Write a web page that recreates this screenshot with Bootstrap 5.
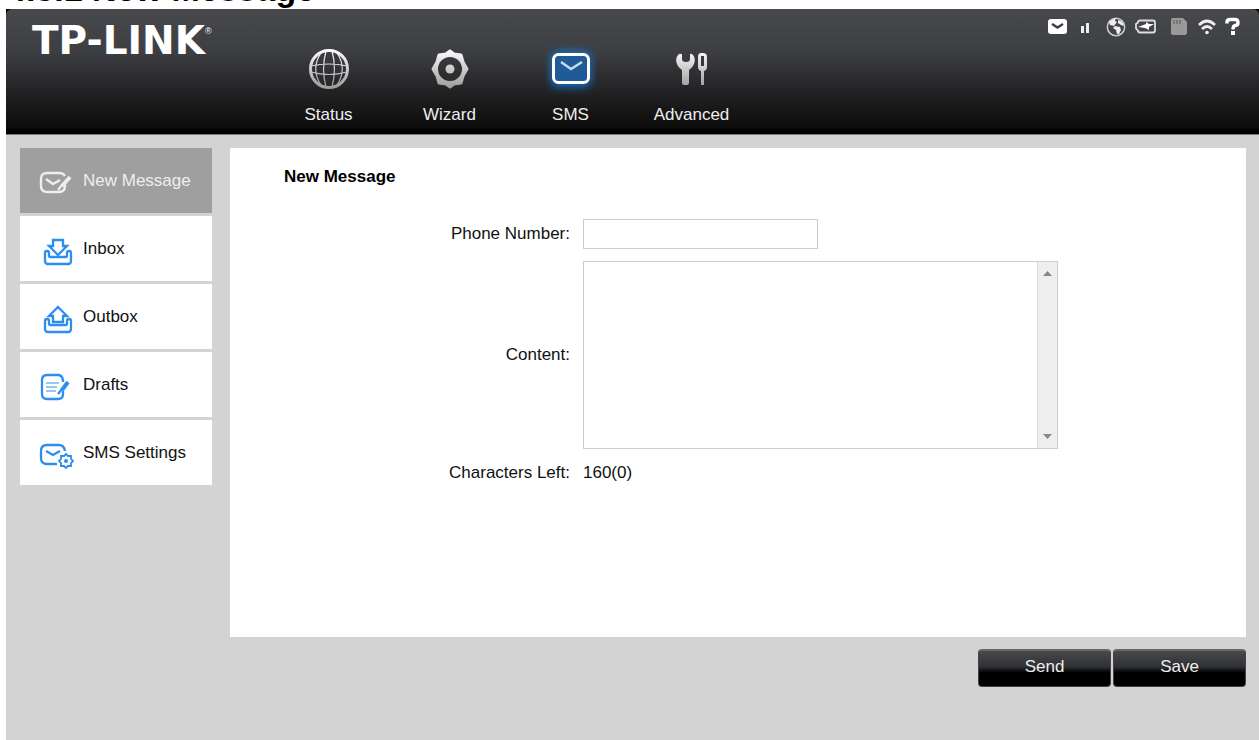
<!DOCTYPE html>
<html lang="en">
<head>
<meta charset="utf-8">
<meta name="viewport" content="width=device-width, initial-scale=1">
<title>New Message</title>
<link href="https://cdn.jsdelivr.net/npm/bootstrap@5.3.0/dist/css/bootstrap.min.css" rel="stylesheet">
<style>
  body { font: 17px/24px "Liberation Sans", Arial, sans-serif; color: #111; background: #fff; }
  svg { display: block; flex: none; }
  .doc-heading { height: 9px; padding-left: 7px; font-size: 34px; line-height: 24px; color: #000; }
  .doc-heading h1 { font: inherit; font-weight: 700; margin: -23px 0 0; white-space: pre; }
  .console { margin-left: 6px; background: #d3d3d3; }
  .topbar { height: 126px; background: linear-gradient(#48494d, #3d3e42 35%, #232325 65%, #0c0c0c 95%, #000 97%); border-bottom: 1px solid #777; border-radius: 6px 6px 0 0; }
  .corner { background: #000; }
  .logo-area { width: 262px; padding: 10px 0 0 26px; }
  .logo { font: 700 39px/44px "DejaVu Sans", sans-serif; color: #fff; text-decoration: none; white-space: nowrap; }
  .logo sup { font: 9px/9px "Liberation Sans", sans-serif; top: -20px; }
  .tab { width: 121px; padding-top: 34px; color: #eee; text-decoration: none; }
  .tab svg { margin: 0 auto; }
  .tab span { display: block; margin-top: 8px; }
  .status-icons { padding: 6px 7px 0 0; }
  .workspace { padding: 13px 13px 0 14px; gap: 18px; }
  .side { width: 192px; gap: 3px; flex: none; }
  .side-item { height: 65px; padding-left: 19px; gap: 8px; background: #fff; color: #111; text-decoration: none; }
  .side-item svg { margin-top: 6px; }
  .side-item.current { background: #9f9f9f; color: #eee; }
  .panel { background: #fff; min-height: 489px; padding: 17px 0; min-width: 0; }
  .panel h2 { font: 700 17px/24px "Liberation Sans", Arial, sans-serif; color: #000; margin: 0 0 30px 54px; }
  .field-row { display: flex; align-items: center; gap: 13px; margin-bottom: 12px; }
  .field-row > :first-child { width: 340px; text-align: right; flex: none; }
  .phone { width: 235px; height: 30px; border: 1px solid #ccc; border-radius: 0; padding: 2px 6px; }
  .editor { width: 475px; height: 188px; border: 1px solid #ccc; }
  .editor textarea { border: 0; resize: none; overflow: hidden; padding: 4px 6px; min-width: 0; outline: 0; }
  .track { width: 20px; background: #eee; border-left: 1px solid #ddd; padding: 9px 0 9px 5px; }
  .actions { padding: 12px 13px 0 0; gap: 2px; }
  .act { width: 133px; height: 38px; padding: 0 0 4px; border: 1px solid #444; border-top: 2px solid #666; border-radius: 4px; background: linear-gradient(#48494c, #303134 45%, #000 62%); color: #eee; }
</style>
</head>
<body>
<div class="d-flex flex-column min-vh-100">
  <div class="doc-heading overflow-hidden"><h1>4.3.1 New Message</h1></div>
  <div class="console flex-grow-1">
    <div class="corner">
    <header class="topbar d-flex">
      <div class="logo-area flex-shrink-0"><a class="logo" href="#">TP-LINK<sup>®</sup></a></div>
      <nav class="d-flex text-center">
        <a class="tab" href="#">
          <svg width="52" height="52" viewBox="0 0 52 52" fill="none" stroke="url(#silver)">
            <defs><linearGradient id="silver" gradientUnits="userSpaceOnUse" x1="0" y1="6" x2="0" y2="46"><stop stop-color="#fff"/><stop offset="1" stop-color="#999"/></linearGradient></defs>
            <circle cx="26" cy="26" r="18.5" stroke-width="3"/>
            <path stroke-width="1.2" d="M23 8C20 19 20 33 23 44M29 8C32 19 32 33 29 44M18 10C11 20 11 32 18 42M34 10C41 20 41 32 34 42M8 23Q26 19 44 23M8 29Q26 34 44 29"/>
          </svg><span>Status</span></a>
        <a class="tab" href="#">
          <svg width="52" height="52" viewBox="0 0 52 52" fill="url(#silver)">
            <path fill-rule="evenodd" stroke="url(#silver)" stroke-width="3" stroke-linejoin="round" d="M26 8l4 3 7 1 2 7 4 7-4 7-2 7-7 1-4 3-4-3-7-1-2-7-4-7 4-7 2-7 7-1zM26 12.500a13.500 13.500 0 1 0 0 27a13.500 13.500 0 1 0 0-27z"/>
            <circle cx="26" cy="26" r="4.5"/>
          </svg><span>Wizard</span></a>
        <a class="tab" href="#" aria-current="page">
          <svg width="52" height="52" viewBox="0 0 52 52" fill="none">
            <defs><filter id="halo" x="-30%" y="-30%" width="160%" height="160%"><feGaussianBlur stdDeviation="4"/></filter></defs>
            <rect x="6" y="8" width="40" height="36" rx="7" fill="#1270c4" filter="url(#halo)"/>
            <rect x="8.5" y="11.5" width="35" height="28" rx="5" fill="#205b98" stroke="#fff" stroke-width="3"/>
            <path d="M16 19l10 7 11-7" stroke="#c5dcf2" stroke-width="2.5"/>
          </svg><span>SMS</span></a>
        <a class="tab" href="#">
          <svg width="52" height="52" viewBox="0 0 52 52" fill="url(#silver)">
            <path d="M13 11C8 15 10 23 16 27V40q0 2 2 2h2q3 0 3-2V27C29 23 31 15 26 11q-2-1-2 1v4q0 3-4 3t-4-3v-4q0-2-3-1z"/>
            <path fill-rule="evenodd" d="M35 10h2q4 0 4 4v10q0 3-3 4v14h-3V28q-3-1-3-4V14q0-4 3-4zM35 13v10h3V13z"/>
          </svg><span>Advanced</span></a>
      </nav>
      <div class="status-icons d-flex ms-auto" aria-hidden="true">
        <svg width="206" height="24" viewBox="0 0 206 24" fill="none">
          <rect x="2" y="4" width="19" height="15" rx="3" fill="#fff"/><path d="M6 9l5.5 3.5L17 9" stroke="#3e3f43" stroke-width="2.5"/>
          <path d="M35 11h3v7h-3zM40 8h3v10h-3z" fill="#eee"/>
          <circle cx="70" cy="12" r="8.7" stroke="#ccc" stroke-width="1.5"/><path d="M63 7q3-3 7-4l-1 3 2 1-3 4-4-1zM72 5q5 1 6 6l-3-1-3-2zM69 11l5 1 1 3-2 4h-2l-1-4-3-2z" fill="#eee"/>
          <path d="M94 5.5h13q2 0 2 2v8q0 2-2 2H94q-2 0-2-2l-2-2V9l2-1.5q0-2 2-2z" stroke="#ddd" stroke-width="1.8"/><path d="M92 12l8-3V7l3 2h5l-5 3v3l-4-2z" fill="#fff"/>
          <path d="M127 3h10l4 4v11q0 2-2 2h-12q-2 0-2-2V5q0-2 2-2z" fill="#999"/><path d="M128 5v4M131 5v4M134 5v4" stroke="#555"/>
          <path d="M153 10q8-8 16 0M156 14q5-5 10 0" stroke="#eee" stroke-width="2.6"/><circle cx="161" cy="17.5" r="1.8" fill="#eee"/>
          <path d="M181 8.5V7Q181 4.500 184 4.500h5q3 0 3 3t-3 3q-2 .5-2 4" stroke="#fff" stroke-width="3.4"/><path d="M185 16h4v4h-4z" fill="#fff"/>
        </svg>
      </div>
    </header>
    </div>

    <div class="workspace d-flex align-items-start">
      <nav class="side d-flex flex-column">
        <a class="side-item current d-flex align-items-center" href="#" aria-current="page">
          <svg width="36" height="32" viewBox="0 0 36 32" fill="none" stroke="#eee" stroke-width="2.4">
            <path d="M26 8q-2-3-5-3H8Q2 5 2 11v7q0 6 6 6h12q6 0 6-6v-1M7 11l7 5 7-4"/><path d="M31 9l-8 9" stroke-width="4"/><path d="M23 17l-4 5"/>
          </svg><span>New Message</span></a>
        <a class="side-item d-flex align-items-center" href="#">
          <svg width="36" height="32" viewBox="0 0 36 32" fill="none" stroke="#2c8ff0" stroke-width="2.3">
            <path d="M14 4h10v6h4l-9 9-9-9h4z"/><path d="M6 17q0-2 2-2t2 2v3q0 1 1 1h16q1 0 1-1v-3q0-2 2-2t2 2v8q0 3-3 3H9q-3 0-3-3z"/>
          </svg><span>Inbox</span></a>
        <a class="side-item d-flex align-items-center" href="#">
          <svg width="36" height="32" viewBox="0 0 36 32" fill="none" stroke="#2c8ff0" stroke-width="2.3">
            <path d="M19 3l9 9h-4v6H14v-6h-4z"/><path d="M6 17q0-2 2-2t2 2v3q0 1 1 1h16q1 0 1-1v-3q0-2 2-2t2 2v8q0 3-3 3H9q-3 0-3-3z"/>
          </svg><span>Outbox</span></a>
        <a class="side-item d-flex align-items-center" href="#">
          <svg width="36" height="32" viewBox="0 0 36 32" fill="none" stroke="#2c8ff0" stroke-width="2.3">
            <path d="M24 10V8q-1-5-5-5H8Q3 3 3 8v14q0 5 5 5h11q5 0 5-5v-3"/><path d="M7 11h13M7 15h11M7 19h10" stroke-width="1.2"/><path d="M29 10l-6 8" stroke-width="4"/><path d="M23 17l-4 5"/>
          </svg><span>Drafts</span></a>
        <a class="side-item d-flex align-items-center" href="#">
          <svg width="36" height="32" viewBox="0 0 36 32" fill="none" stroke="#2c8ff0" stroke-width="2.3">
            <path d="M18 24H8q-6 0-6-6v-7q0-6 6-6h12q5 0 6 6M7 11l7 4 7-4"/><path d="M27 14l2 2h3v3l2 2-2 2v3h-3l-2 2-2-2h-3v-3l-2-2 2-2v-3h3z" stroke-width="1.8"/><circle cx="27" cy="21" r="2" fill="#2c8ff0" stroke="none"/>
          </svg><span>SMS Settings</span></a>
      </nav>

      <main class="panel flex-grow-1">
        <h2>New Message</h2>
        <form id="compose">
          <div class="field-row"><label for="phone">Phone Number:</label><input class="phone" id="phone" type="text"></div>
          <div class="field-row"><label for="content">Content:</label>
            <div class="editor d-flex"><textarea class="flex-grow-1" id="content"></textarea>
              <div class="track d-flex flex-column justify-content-between" aria-hidden="true">
                <svg width="9" height="5"><path d="M0 5L4.5 0 9 5z" fill="#888"/></svg>
                <svg width="9" height="5"><path d="M0 0l4.5 5L9 0z" fill="#888"/></svg>
              </div></div></div>
          <div class="field-row"><span>Characters Left:</span><output for="content">160(0)</output></div>
        </form>
      </main>
    </div>
    <div class="actions d-flex justify-content-end">
      <button class="act" type="submit" form="compose">Send</button>
      <button class="act" type="button">Save</button>
    </div>
  </div>
</div>
<script src="https://cdn.jsdelivr.net/npm/bootstrap@5.3.0/dist/js/bootstrap.bundle.min.js"></script>
</body>
</html>
